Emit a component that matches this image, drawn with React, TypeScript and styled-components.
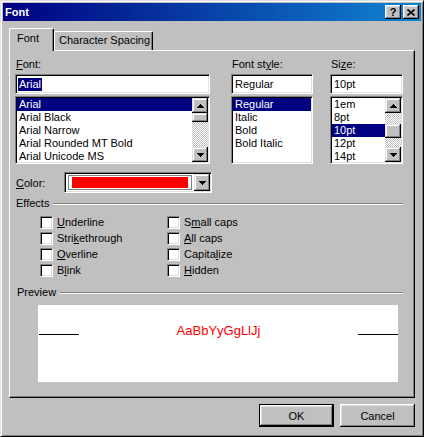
import styled, { createGlobalStyle } from 'styled-components'

const GlobalStyle = createGlobalStyle`
  html, body {
    margin: 0;
    padding: 0;
    background: #c0c0c0;
  }
  body {
    font-family: "Liberation Sans", Arial, sans-serif;
    font-size: 11px;
    color: #000;
  }
  * {
    box-sizing: border-box;
  }
`

const raised = `
  box-shadow: inset -1px -1px #000, inset 1px 1px #fff, inset -2px -2px #808080, inset 2px 2px #dfdfdf;
`

const raisedSmall = `
  box-shadow: inset -1px -1px #000, inset 1px 1px #dfdfdf, inset -2px -2px #808080, inset 2px 2px #fff;
`

const sunken = `
  border: 1px solid;
  border-color: #808080 #fff #fff #808080;
  box-shadow: inset 1px 1px #000, inset -1px -1px #dfdfdf;
  padding: 1px;
`

const fonts = ['Arial', 'Arial Black', 'Arial Narrow', 'Arial Rounded MT Bold', 'Arial Unicode MS']
const styles = ['Regular', 'Italic', 'Bold', 'Bold Italic']
const sizes = ['1em', '8pt', '10pt', '12pt', '14pt']

const leftEffects = [
    { text: 'Underline', at: 0 },
    { text: 'Strikethrough', at: 4 },
    { text: 'Overline', at: 0 },
    { text: 'Blink', at: 1 },
]

const rightEffects = [
    { text: 'Small caps', at: 1 },
    { text: 'All caps', at: 0 },
    { text: 'Capitalize', at: 6 },
    { text: 'Hidden', at: 0 },
]

function Mnemonic({ text, at }: { text: string, at: number }){
    return (
        <>
            {text.slice(0, at)}<u>{text[at]}</u>{text.slice(at + 1)}
        </>
    )
}

function Arrow({ down }: { down?: boolean }){
    return (
        <svg width="7" height="4" viewBox="0 0 7 4" style={down ? { transform: 'scaleY(-1)' } : undefined}>
            <path d="M3 0h1v1h-1z M2 1h3v1h-3z M1 2h5v1h-5z M0 3h7v1h-7z" fill="#000" />
        </svg>
    )
}

function ListBox({ items, selected, thumbOffset, thumbSize }: any){
    return (
        <List>
            <ListItems>
                {items.map((item: string) => (
                    <ListItem key={item} $selected={item === selected}>{item}</ListItem>
                ))}
            </ListItems>
            {thumbSize !== undefined && (
                <ScrollBar>
                    <ScrollButton><Arrow /></ScrollButton>
                    <ScrollTrack>
                        <Thumb $offset={thumbOffset} $size={thumbSize} />
                    </ScrollTrack>
                    <ScrollButton><Arrow down /></ScrollButton>
                </ScrollBar>
            )}
        </List>
    )
}

export default function App(){
    return (
        <>
            <GlobalStyle />
            <Window>
                <TitleBar>
                    <Title>Font</Title>
                    <CaptionButtons>
                        <CaptionButton>?</CaptionButton>
                        <CaptionButton>
                            <svg width="8" height="7" viewBox="0 0 8 7">
                                <path d="M0.5 0.5 L7.5 6.5 M7.5 0.5 L0.5 6.5" stroke="#000" strokeWidth="1.6" />
                            </svg>
                        </CaptionButton>
                    </CaptionButtons>
                </TitleBar>

                <Body>
                    <TabStrip>
                        <Tab $active>Font</Tab>
                        <Tab>Character Spacing</Tab>
                    </TabStrip>

                    <Panel>
                        <FieldRow>
                            <FieldColumn $width={195}>
                                <FieldLabel><Mnemonic text="Font:" at={0} /></FieldLabel>
                                <Input><SelectedText>Arial</SelectedText></Input>
                                <ListBox items={fonts} selected="Arial" thumbOffset={0} thumbSize={9} />
                            </FieldColumn>
                            <FieldColumn $width={82} $gap={21}>
                                <FieldLabel><Mnemonic text="Font style:" at={7} /></FieldLabel>
                                <Input><InputText>Regular</InputText></Input>
                                <ListBox items={styles} selected="Regular" />
                            </FieldColumn>
                            <FieldColumn $width={73} $gap={17}>
                                <FieldLabel><Mnemonic text="Size:" at={2} /></FieldLabel>
                                <Input><InputText>10pt</InputText></Input>
                                <ListBox items={sizes} selected="10pt" thumbOffset={11} thumbSize={14} />
                            </FieldColumn>
                        </FieldRow>

                        <ColorRow>
                            <ColorLabel><Mnemonic text="Color:" at={0} /></ColorLabel>
                            <Combo>
                                <SwatchArea>
                                    <SwatchFrame>
                                        <Swatch $color="#ff0000" />
                                    </SwatchFrame>
                                </SwatchArea>
                                <DropButton><Arrow down /></DropButton>
                            </Combo>
                        </ColorRow>

                        <GroupHeader>
                            <span>Effects</span>
                            <Etched />
                        </GroupHeader>

                        <CheckGrid>
                            {[...leftEffects, ...rightEffects].map(e => (
                                <CheckItem key={e.text}>
                                    <CheckBox />
                                    <span><Mnemonic text={e.text} at={e.at} /></span>
                                </CheckItem>
                            ))}
                        </CheckGrid>

                        <GroupHeader $top={8}>
                            <PreviewLabel>Preview</PreviewLabel>
                            <Etched />
                        </GroupHeader>

                        <PreviewBox>
                            <BaseLine $left />
                            <PreviewText $color="#ff0000">AaBbYyGgLlJj</PreviewText>
                            <BaseLine />
                        </PreviewBox>
                    </Panel>

                    <ButtonRow>
                        <Button $default>OK</Button>
                        <Button>Cancel</Button>
                    </ButtonRow>
                </Body>
            </Window>
        </>
    )
}

const Window = styled.div`
    width: 424px;
    height: 437px;
    background: #c0c0c0;
    border: 1px solid;
    border-color: #dfdfdf #000 #000 #dfdfdf;
    box-shadow: inset 1px 1px #fff, inset -1px -1px #808080;
    padding: 2px;
    display: flex;
    flex-direction: column;
`

const TitleBar = styled.div`
    height: 18px;
    display: flex;
    align-items: center;
    padding: 0 2px 0 2px;
    background: linear-gradient(90deg, #000080, #1084d0);
    color: #fff;
    font-weight: bold;
    font-size: 11px;
`

const Title = styled.span`
    flex: 1;
`

const CaptionButtons = styled.div`
    display: flex;
    gap: 2px;
`

const CaptionButton = styled.div`
    width: 16px;
    height: 14px;
    background: #c0c0c0;
    ${raised}
    display: flex;
    align-items: center;
    justify-content: center;
    color: #000;
    font-weight: bold;
    font-size: 11px;
    line-height: 14px;
`

const Body = styled.div`
    flex: 1;
    display: flex;
    flex-direction: column;
    padding: 7px 6px 7px 6px;
`

const TabStrip = styled.div`
    height: 22px;
    display: flex;
    align-items: flex-end;
    position: relative;
    z-index: 1;
`

const Tab = styled.div<{ $active?: boolean }>`
    width: ${p => p.$active ? 45 : 99}px;
    height: ${p => p.$active ? 23 : 19}px;
    margin-bottom: ${p => p.$active ? -1 : 0}px;
    padding: ${p => p.$active ? '3px 0 0 7px' : '2px 0 0 4px'};
    line-height: 13px;
    background: #c0c0c0;
    border-top: 1px solid #fff;
    border-left: 1px solid #fff;
    border-right: 1px solid #000;
    border-radius: 2px 2px 0 0;
    box-shadow: inset -1px 0 #808080;
    white-space: nowrap;
`

const Panel = styled.div`
    height: 348px;
    border: 1px solid;
    border-color: #fff #000 #000 #fff;
    box-shadow: inset -1px -1px #808080;
    padding: 7px 11px 0 5px;
    display: flex;
    flex-direction: column;
`

const FieldRow = styled.div`
    display: flex;
`

const FieldColumn = styled.div<{ $width: number, $gap?: number }>`
    width: ${p => p.$width}px;
    margin-left: ${p => p.$gap || 0}px;
    display: flex;
    flex-direction: column;
`

const FieldLabel = styled.div`
    height: 13px;
    line-height: 13px;
    padding-left: 1px;
    margin-bottom: 3px;
`

const Input = styled.div`
    height: 20px;
    ${sunken}
    padding: 1px 1px 1px 2px;
    background: #fff;
    display: flex;
    align-items: center;
    margin-bottom: 2px;
`

const InputText = styled.span`
    padding-left: 1px;
    line-height: 13px;
`

const SelectedText = styled.span`
    background: #000080;
    color: #fff;
    padding: 0 1px;
    line-height: 13px;
`

const List = styled.div`
    height: 68px;
    ${sunken}
    background: #fff;
    display: flex;
`

const ListItems = styled.div`
    flex: 1;
    overflow: hidden;
`

const ListItem = styled.div<{ $selected?: boolean }>`
    height: 13px;
    line-height: 13px;
    padding-left: 2px;
    white-space: nowrap;
    background: ${p => p.$selected ? '#000080' : 'transparent'};
    color: ${p => p.$selected ? '#fff' : '#000'};
`

const ScrollBar = styled.div`
    width: 16px;
    display: flex;
    flex-direction: column;
`

const ScrollButton = styled.div`
    height: 15px;
    background: #c0c0c0;
    ${raisedSmall}
    display: flex;
    align-items: center;
    justify-content: center;
`

const ScrollTrack = styled.div`
    flex: 1;
    display: flex;
    flex-direction: column;
    background: repeating-conic-gradient(#fff 0 25%, #c0c0c0 0 50%) 0 0 / 2px 2px;
`

const Thumb = styled.div<{ $offset: number, $size: number }>`
    margin-top: ${p => p.$offset}px;
    height: ${p => p.$size}px;
    background: #c0c0c0;
    ${raisedSmall}
`

const ColorRow = styled.div`
    display: flex;
    align-items: center;
    margin-top: 8px;
`

const ColorLabel = styled.div`
    width: 49px;
    padding-left: 1px;
`

const Combo = styled.div`
    width: 148px;
    height: 21px;
    ${sunken}
    background: #fff;
    display: flex;
`

const SwatchArea = styled.div`
    flex: 1;
    padding: 1px 2px;
    display: flex;
`

const SwatchFrame = styled.div`
    flex: 1;
    border: 1px solid #808080;
    padding: 1px 3px;
    display: flex;
`

const Swatch = styled.div<{ $color: string }>`
    flex: 1;
    background: ${p => p.$color};
`

const DropButton = styled.div`
    width: 16px;
    background: #c0c0c0;
    ${raisedSmall}
    display: flex;
    align-items: center;
    justify-content: center;
`

const GroupHeader = styled.div<{ $top?: number }>`
    height: 13px;
    margin-top: ${p => p.$top || 4}px;
    padding-left: 1px;
    display: flex;
    align-items: center;
    gap: 4px;
    line-height: 13px;
`

const PreviewLabel = styled.span`
    padding-left: 1px;
`

const Etched = styled.div`
    flex: 1;
    height: 2px;
    border-top: 1px solid #808080;
    border-bottom: 1px solid #fff;
`

const CheckGrid = styled.div`
    display: grid;
    grid-template-columns: 127px auto;
    grid-template-rows: repeat(4, 16px);
    grid-auto-flow: column;
    margin: 4px 0 0 25px;
`

const CheckItem = styled.label`
    display: flex;
    align-items: center;
    gap: 4px;
    line-height: 13px;
`

const CheckBox = styled.span`
    width: 13px;
    height: 13px;
    background: #fff;
    border: 1px solid;
    border-color: #808080 #fff #fff #808080;
    box-shadow: inset 1px 1px #000, inset -1px -1px #dfdfdf;
`

const PreviewBox = styled.div`
    width: 360px;
    height: 77px;
    margin: 6px 0 0 23px;
    padding-top: 18px;
    background: #fff;
    display: flex;
    align-items: baseline;
    justify-content: space-between;
`

const BaseLine = styled.div<{ $left?: boolean }>`
    width: 40px;
    height: 1px;
    margin-left: ${p => p.$left ? 1 : 0}px;
    background: #000;
`

const PreviewText = styled.span<{ $color: string }>`
    font-family: "Liberation Sans", Arial, sans-serif;
    font-size: 13px;
    line-height: 15px;
    color: ${p => p.$color};
`

const ButtonRow = styled.div`
    display: flex;
    justify-content: flex-end;
    gap: 6px;
    margin-top: 6px;
`

const Button = styled.button<{ $default?: boolean }>`
    width: 75px;
    height: 23px;
    padding: 0;
    font: inherit;
    color: #000;
    background: #c0c0c0;
    border: ${p => p.$default ? '1px solid #000' : 'none'};
    ${raised}
`
